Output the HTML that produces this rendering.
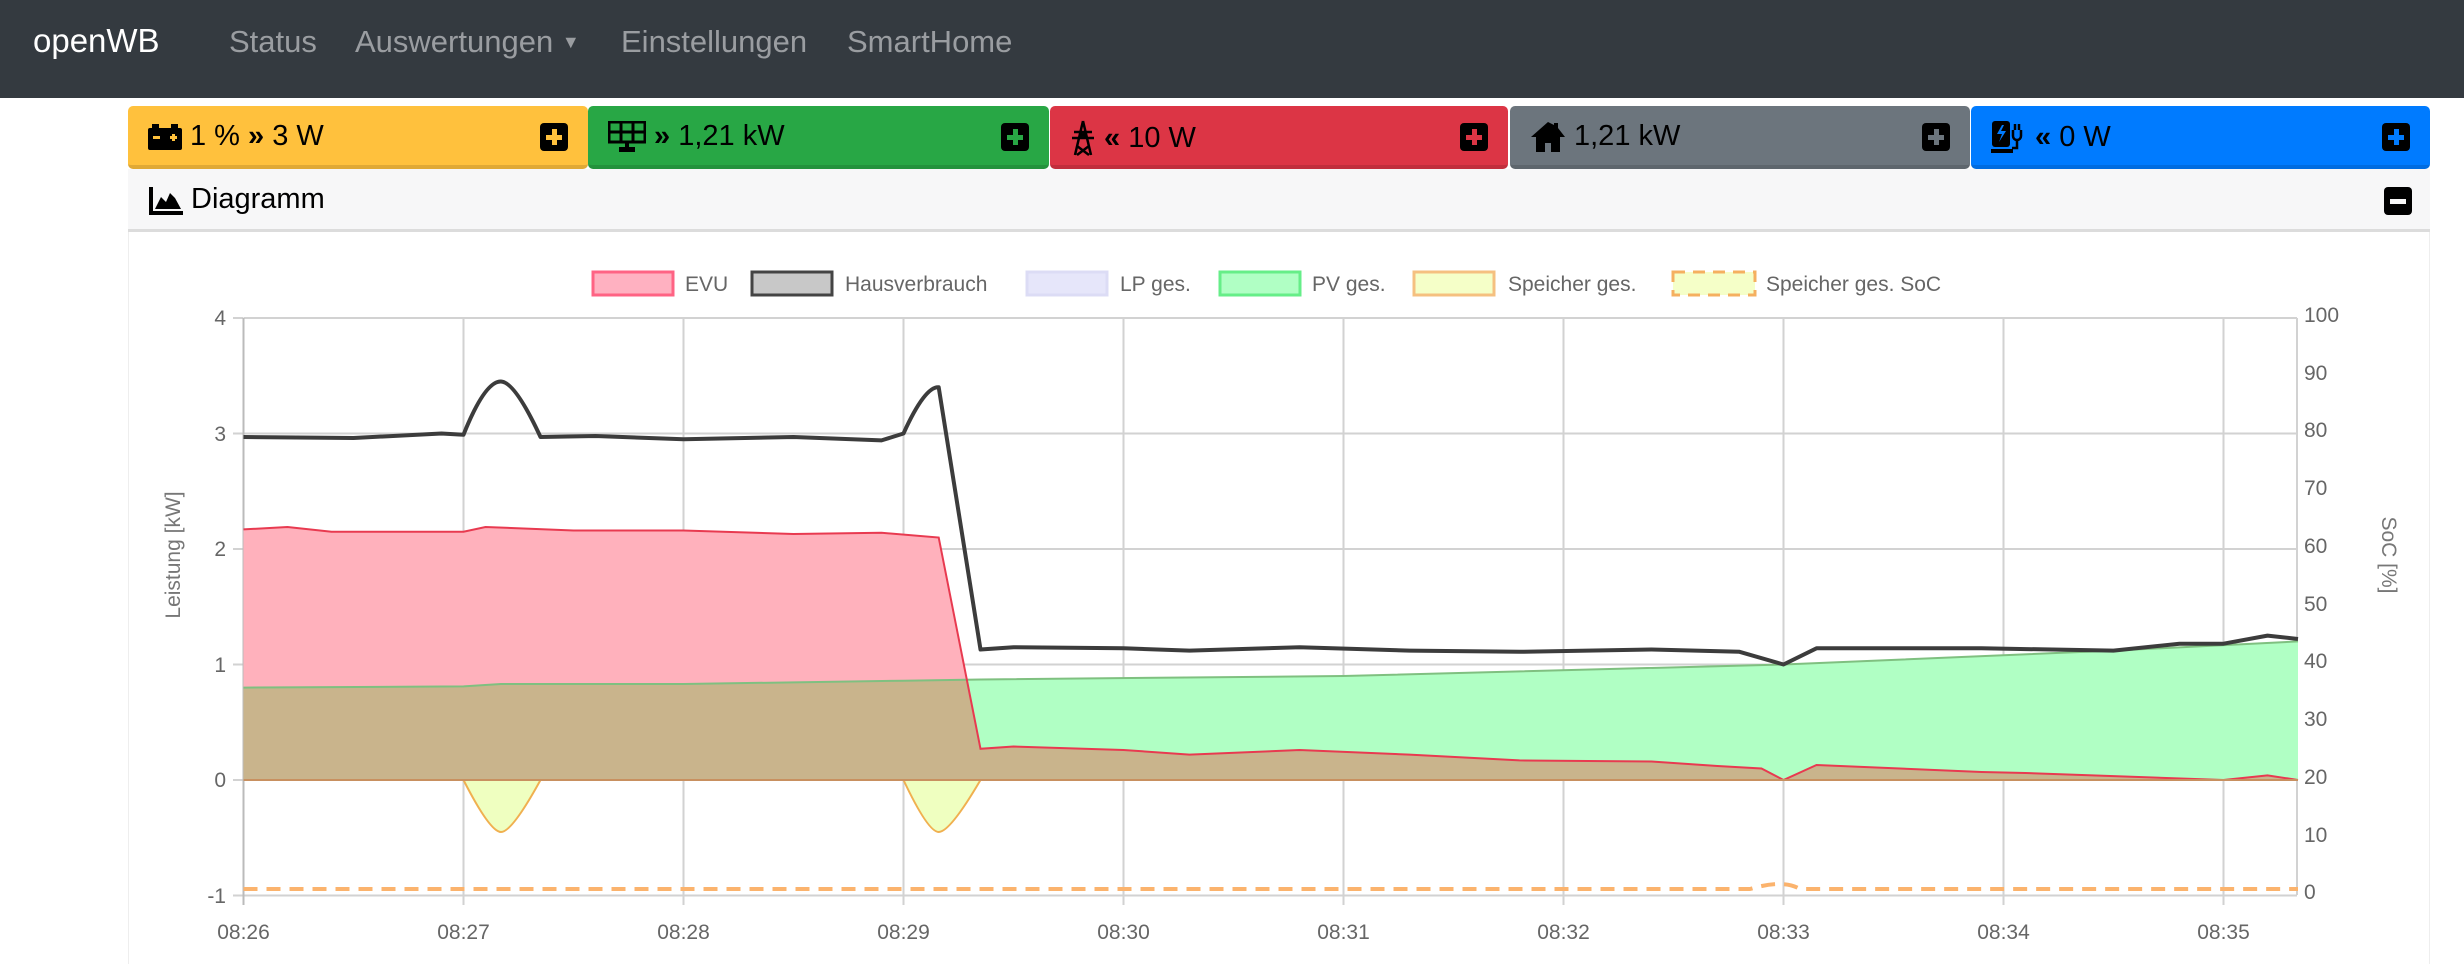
<!DOCTYPE html>
<html><head><meta charset="utf-8"><style>
*{box-sizing:border-box;margin:0;padding:0}
body{width:2464px;height:964px;overflow:hidden;background:#fff;font-family:"Liberation Sans",sans-serif;position:relative}
.nav{position:absolute;left:0;top:0;width:2464px;height:98px;background:#343a40}
.nav span{position:absolute;top:24px;font-size:31px;color:#9a9da1}
.tile{position:absolute;top:106px;height:63px;border-radius:5px;border-bottom:4px solid rgba(0,0,0,.12);font-size:29px;color:#000}
.tile .t{position:absolute;left:20px;top:14px;white-space:nowrap;display:flex;align-items:center;gap:8px}
.tile .p{position:absolute;right:20px;top:17px;width:28px;height:28px;background:#000;border-radius:4px}
.tile .p:before{content:"";position:absolute;left:12px;top:6px;width:5px;height:16px;background:var(--c)}
.tile .p:after{content:"";position:absolute;left:6px;top:12px;width:16px;height:5px;background:var(--c)}
.hdr{position:absolute;left:128px;top:169px;width:2302px;height:63px;background:#f7f7f8;border-bottom:3px solid #dcdcdc}
.card{position:absolute;left:128px;top:232px;width:2302px;height:732px;border-left:1px solid #eee;border-right:1px solid #eee}
</style></head><body>
<div class="nav">
<span style="left:33px;color:#fff;font-size:33px;top:22px">openWB</span>
<span style="left:229px">Status</span>
<span style="left:355px">Auswertungen <span style="position:static;font-size:18px;vertical-align:4px">▼</span></span>
<span style="left:621px">Einstellungen</span>
<span style="left:847px">SmartHome</span>
</div>

<div class="tile" style="left:128px;width:460px;background:#ffc13d;--c:#ffc13d"><div class="t">
<svg width="34" height="26" viewBox="0 0 34 26"><rect x="4" y="0" width="7" height="5"/><rect x="23" y="0" width="7" height="5"/><rect x="0" y="4" width="34" height="22" rx="2"/><rect x="5" y="12" width="7" height="3" fill="#ffc13d"/><rect x="22" y="12" width="7" height="3" fill="#ffc13d"/><rect x="24" y="10" width="3" height="7" fill="#ffc13d"/></svg>
<span>1 % <b>»</b> 3 W</span></div><div class="p"></div></div>

<div class="tile" style="left:588px;width:461px;background:#28a745;--c:#28a745"><div class="t">
<svg width="38" height="32" viewBox="0 0 38 32"><rect x="1" y="1" width="36" height="20" fill="none" stroke="#000" stroke-width="3"/><path d="M13 1v20M25 1v20M1 11h36" stroke="#000" stroke-width="3"/><rect x="17" y="21" width="4" height="6"/><rect x="11" y="26" width="16" height="5"/></svg>
<span><b>»</b> 1,21 kW</span></div><div class="p"></div></div>

<div class="tile" style="left:1050px;width:458px;background:#dc3545;--c:#dc3545"><div class="t">
<svg width="26" height="36" viewBox="0 0 26 36"><path d="M13 1L5 35M13 1l8 34M4 12h18M2 18h22M7 26l12 9M19 26L7 35M9 12l8 6M17 12l-8 6" stroke="#000" stroke-width="2.5" fill="none"/></svg>
<span><b>«</b> 10 W</span></div><div class="p"></div></div>

<div class="tile" style="left:1510px;width:460px;background:#6c757d;--c:#6c757d"><div class="t">
<svg width="36" height="32" viewBox="0 0 36 32"><path d="M18 1L1 16h5v15h9v-9h6v9h9V16h5L28 7V2h-4v2z"/></svg>
<span>1,21 kW</span></div><div class="p"></div></div>

<div class="tile" style="left:1971px;width:459px;background:#007bff;--c:#007bff"><div class="t">
<svg width="36" height="34" viewBox="0 0 36 34"><rect x="1" y="1" width="18" height="26" rx="3"/><rect x="0" y="29" width="22" height="4"/><path d="M11 5l-5 9h5l-3 8 7-11h-5l3-6z" fill="#007bff"/><path d="M22 10v6a4 4 0 0 0 8 0v-6M24 4v6M28 4v6M26 20v8h-5" stroke="#000" stroke-width="2.5" fill="none"/></svg>
<span><b>«</b> 0 W</span></div><div class="p"></div></div>

<div class="hdr">
<svg style="position:absolute;left:21px;top:18px" width="34" height="28" viewBox="0 0 34 28"><path d="M0 0h4v24h30v4H0z"/><path d="M6 22l6-12 5 5 4-9 5 5 6 11z"/></svg>
<span style="position:absolute;left:63px;top:14px;font-size:29px">Diagramm</span>
<div style="position:absolute;right:18px;top:18px;width:28px;height:28px;background:#000;border-radius:4px"><div style="position:absolute;left:6px;top:12px;width:16px;height:5px;background:#f7f7f8"></div></div>
</div>
<div class="card"></div>

<svg style="position:absolute;left:0;top:0" width="2464" height="964" font-family="Liberation Sans, sans-serif">
<g font-size="21" fill="#666">
<rect x="593" y="272" width="80" height="23" fill="#ffb1c1" stroke="#ff6384" stroke-width="3"/><text x="685" y="291">EVU</text>
<rect x="752" y="272" width="80" height="23" fill="#c8c8c8" stroke="#444" stroke-width="3"/><text x="845" y="291">Hausverbrauch</text>
<rect x="1027" y="272" width="80" height="23" fill="#e6e6fa" stroke="#dcdcf5" stroke-width="3"/><text x="1120" y="291">LP ges.</text>
<rect x="1220" y="272" width="80" height="23" fill="#b0ffc4" stroke="#66ee88" stroke-width="3"/><text x="1312" y="291">PV ges.</text>
<rect x="1414" y="272" width="80" height="23" fill="#f5ffc8" stroke="#f5c080" stroke-width="3"/><text x="1508" y="291">Speicher ges.</text>
<rect x="1673" y="272" width="82" height="23" fill="#f5ffc8" stroke="#f5b060" stroke-width="3" stroke-dasharray="12 8"/><text x="1766" y="291">Speicher ges. SoC</text>
</g>
<g stroke="#d2d2d2" stroke-width="2">
<path d="M243.5 318H2297M243.5 433.5H2297M243.5 549H2297M243.5 664.5H2297M243.5 780H2297M243.5 895.5H2297"/>
<path d="M463.5 318V905M683.5 318V905M903.5 318V905M1123.5 318V905M1343.5 318V905M1563.5 318V905M1783.5 318V905M2003.5 318V905M2223.5 318V905M2297 318V895"/>
<path d="M233 318h10M233 433.5h10M233 549h10M233 664.5h10M233 780h10M233 895.5h10"/>
</g>
<path d="M243.5 318V905" stroke="#bbb" stroke-width="2"/>
<g font-size="21" fill="#666" text-anchor="end">
<text x="226" y="325">4</text><text x="226" y="441">3</text><text x="226" y="556">2</text><text x="226" y="672">1</text><text x="226" y="787">0</text><text x="226" y="903">-1</text>
</g>
<g font-size="21" fill="#666">
<text x="2304" y="322">100</text><text x="2304" y="380">90</text><text x="2304" y="437">80</text><text x="2304" y="495">70</text><text x="2304" y="553">60</text><text x="2304" y="611">50</text><text x="2304" y="668">40</text><text x="2304" y="726">30</text><text x="2304" y="784">20</text><text x="2304" y="842">10</text><text x="2304" y="899">0</text>
</g>
<g font-size="21" fill="#666" text-anchor="middle">
<text x="243.5" y="939">08:26</text><text x="463.5" y="939">08:27</text><text x="683.5" y="939">08:28</text><text x="903.5" y="939">08:29</text><text x="1123.5" y="939">08:30</text><text x="1343.5" y="939">08:31</text><text x="1563.5" y="939">08:32</text><text x="1783.5" y="939">08:33</text><text x="2003.5" y="939">08:34</text><text x="2223.5" y="939">08:35</text>
</g>
<text transform="translate(180 555) rotate(-90)" font-size="21" fill="#777" text-anchor="middle">Leistung [kW]</text>
<text transform="translate(2382 555) rotate(90)" font-size="21" fill="#777" text-anchor="middle">SoC [%]</text>

<path d="M243.5 780L243.5 687.6 463.5 686.4 501 684 683.5 684 903.5 680.7 980.5 679.5 1343.5 676 1783.5 664.5 2113.5 650.6 2298 641.4 2298 780Z" fill="#b0ffc4"/>
<path d="M243.5 780L243.5 529.4 287.5 527 331.5 531.7 463.5 531.7 485.5 527 573.5 530.5 683.5 530.5 793.5 534 881.5 532.8 938.7 537.5 980.5 748.8 1013.5 746.5 1123.5 750 1189.5 754.6 1299.5 750 1409.5 754.6 1519.5 760.4 1651.5 761.5 1717.5 766 1761.5 768.5 1783.5 780 1816.5 765 1981.5 772 2025.5 773 2223.5 780 2267.5 775.4 2298 780Z" fill="#ffb1bc"/>
<path d="M243.5 780L243.5 687.6 463.5 686.4 501 684 683.5 684 903.5 680.7 967.3 679.5 980.5 748.8 1013.5 746.5 1123.5 750 1189.5 754.6 1299.5 750 1409.5 754.6 1519.5 760.4 1651.5 761.5 1717.5 766 1761.5 768.5 1783.5 780 1816.5 765 1981.5 772 2025.5 773 2223.5 780 2267.5 775.4 2298 780Z" fill="#c9b48c"/>
<path d="M243.5 687.6L463.5 686.4 501 684 683.5 684 903.5 680.7 980.5 679.5 1343.5 676 1783.5 664.5 2113.5 650.6 2298 641.4" fill="none" stroke="#7fc080" stroke-width="2"/>
<path d="M243.5 529.4L287.5 527 331.5 531.7 463.5 531.7 485.5 527 573.5 530.5 683.5 530.5 793.5 534 881.5 532.8 938.7 537.5 980.5 748.8 1013.5 746.5 1123.5 750 1189.5 754.6 1299.5 750 1409.5 754.6 1519.5 760.4 1651.5 761.5 1717.5 766 1761.5 768.5 1783.5 780 1816.5 765 1981.5 772 2025.5 773 2223.5 780 2267.5 775.4 2298 780" fill="none" stroke="#e83a50" stroke-width="2"/>
<path d="M463.5 780Q490 832 501 832Q512 832 540.5 780ZM903.5 780Q928 832 938.7 832Q950 832 980.5 780Z" fill="#efffc0" stroke="#f0b050" stroke-width="2"/>
<path d="M243.5 780H2298" stroke="#c89060" stroke-width="2"/>
<path d="M243.5 437L353.5 438 441.5 433.5 463.5 434.7 Q485 381 501 381.5 Q515 382 540.5 437L595.5 436 683.5 439.3 793.5 437 881.5 440.4 903.5 433.5 Q925 386 938.7 387.3 L980.5 649.5 1013.5 647.2 1123.5 648.3 1189.5 650.6 1299.5 647.2 1409.5 650.6 1519.5 651.8 1651.5 649.5 1739.5 651.8 1783.5 664.5 1816.5 648.3 1981.5 648.3 2113.5 650.6 2179.5 643.7 2223.5 643.7 2267.5 635.6 2298 639" fill="none" stroke="#3c3c3c" stroke-width="4" stroke-linejoin="round"/>
<path d="M243.5 889H1750Q1783.5 879 1800 889H2298" fill="none" stroke="#fbb36d" stroke-width="4" stroke-dasharray="14 9"/>
</svg>
</body></html>
